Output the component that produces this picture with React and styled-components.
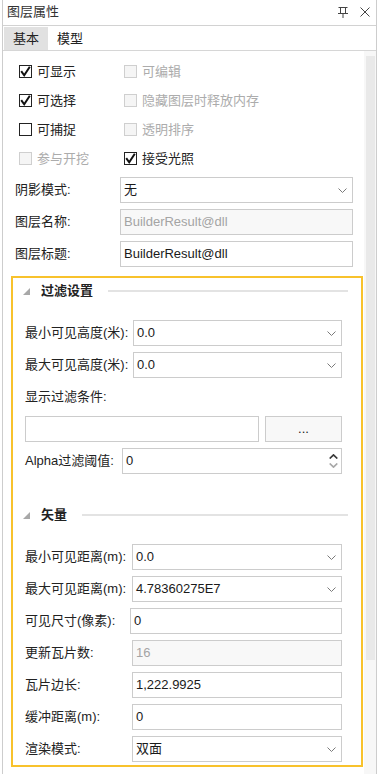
import styled, { createGlobalStyle } from "styled-components";

const checks = [
  { label: "可显示", checked: true },
  { label: "可编辑", disabled: true },
  { label: "可选择", checked: true },
  { label: "隐藏图层时释放内存", disabled: true },
  { label: "可捕捉" },
  { label: "透明排序", disabled: true },
  { label: "参与开挖", disabled: true },
  { label: "接受光照", checked: true },
];

const layerFields = [
  { label: "阴影模式:", value: "无", kind: "select" },
  { label: "图层名称:", value: "BuilderResult@dll", disabled: true },
  { label: "图层标题:", value: "BuilderResult@dll" },
];

const vectorFields = [
  { label: "最小可见距离(m):", value: "0.0", kind: "select" },
  { label: "最大可见距离(m):", value: "4.78360275E7", kind: "select" },
  { label: "可见尺寸(像素):", value: "0", width: 105 },
  { label: "更新瓦片数:", value: "16", disabled: true },
  { label: "瓦片边长:", value: "1,222.9925" },
  { label: "缓冲距离(m):", value: "0" },
  { label: "渲染模式:", value: "双面", kind: "select" },
];

function CheckBox({ checked, disabled }) {
  return (
    <svg width="13" height="13" viewBox="0 0 13 13">
      <rect
        x="0.5"
        y="0.5"
        width="12"
        height="12"
        fill={disabled ? "#f5f5f5" : "#fff"}
        stroke={disabled ? "#cfcfcf" : "#222"}
      />
      {checked && (
        <path d="M2.2 6.2 L5.2 10.3 L10.8 1.8" stroke="#111" strokeWidth="2" fill="none" />
      )}
    </svg>
  );
}

function Chevron() {
  return (
    <svg width="9" height="5" viewBox="0 0 9 5">
      <path d="M0.5 0.5 L4.5 4.5 L8.5 0.5" stroke="#7a7a7a" fill="none" />
    </svg>
  );
}

function Field({ label, value, kind, disabled, width }) {
  return (
    <Row>
      <Label $width={width}>{label}</Label>
      <Control $disabled={disabled}>
        <span>{value}</span>
        {kind === "select" && <Chevron />}
      </Control>
    </Row>
  );
}

function SectionHeader({ title }) {
  return (
    <Header>
      <svg width="7" height="7" viewBox="0 0 7 7">
        <polygon points="7,0 7,7 0,7" fill="#a8a8a8" />
      </svg>
      <HeaderTitle>{title}</HeaderTitle>
      <HeaderLine />
    </Header>
  );
}

export default function App() {
  return (
    <>
      <GlobalStyle />
      <Panel>
        <TitleBar>
          <span>图层属性</span>
          <TitleIcons>
            <svg width="10" height="11" viewBox="0 0 10 11">
              <path d="M0.5 0.5H9.5M2.5 0.5V6M7.5 0.5V6M0 6.5H10" stroke="#444" fill="none" />
              <path d="M5 7V11" stroke="#8a8a8a" strokeWidth="1.6" />
            </svg>
            <svg width="10" height="10" viewBox="0 0 10 10">
              <path d="M0.5 0.5L9.5 9.5M9.5 0.5L0.5 9.5" stroke="#444" fill="none" />
            </svg>
          </TitleIcons>
        </TitleBar>
        <TabBar>
          <Tab $active>基本</Tab>
          <Tab>模型</Tab>
        </TabBar>
        <Body>
          <Content>
            <CheckGrid>
              {checks.map((c) => (
                <CheckItem key={c.label} $disabled={c.disabled}>
                  <CheckBox checked={c.checked} disabled={c.disabled} />
                  <span>{c.label}</span>
                </CheckItem>
              ))}
            </CheckGrid>
            <TopFields>
              {layerFields.map((f) => (
                <Field key={f.label} {...f} width={105} />
              ))}
            </TopFields>
            <Highlight>
              <SectionHeader title="过滤设置" />
              <FieldList>
                <Field label="最小可见高度(米):" value="0.0" kind="select" width={108} />
                <Field label="最大可见高度(米):" value="0.0" kind="select" width={108} />
                <Row>
                  <Label>显示过滤条件:</Label>
                </Row>
                <Row>
                  <Control />
                  <BrowseButton>...</BrowseButton>
                </Row>
                <Row>
                  <Label $width={97}>Alpha过滤阈值:</Label>
                  <Control>
                    <span>0</span>
                    <Spin>
                      <svg width="9" height="5" viewBox="0 0 9 5">
                        <path d="M0.7 4.5 L4.5 0.9 L8.3 4.5" stroke="#3a3a3a" strokeWidth="1.7" fill="none" />
                      </svg>
                      <svg width="9" height="5" viewBox="0 0 9 5">
                        <path d="M0.7 0.5 L4.5 4.1 L8.3 0.5" stroke="#a8a8a8" strokeWidth="1.7" fill="none" />
                      </svg>
                    </Spin>
                  </Control>
                </Row>
              </FieldList>
              <SectionGap />
              <SectionHeader title="矢量" />
              <FieldList>
                {vectorFields.map((f) => (
                  <Field key={f.label} {...f} width={f.width || 107} />
                ))}
              </FieldList>
            </Highlight>
          </Content>
          <ScrollTrack>
            <ScrollThumb />
          </ScrollTrack>
        </Body>
      </Panel>
    </>
  );
}

const GlobalStyle = createGlobalStyle`
  * { box-sizing: border-box; }
  html, body { margin: 0; padding: 0; background: #fff; }
  body {
    font-family: "Liberation Sans", "Noto Sans CJK SC", sans-serif;
    font-size: 13px;
    line-height: 18px;
    color: #222;
  }
`;

const Panel = styled.div`
  margin-left: 2px;
  width: 375px;
  height: 774px;
  border-left: 1px solid #cdcdcd;
  border-right: 1px solid #cdcdcd;
  display: flex;
  flex-direction: column;
  overflow: hidden;
  background: #fff;
`;

const TitleBar = styled.div`
  height: 26px;
  flex-shrink: 0;
  display: flex;
  align-items: center;
  padding: 0 6px 1px 4px;
  border-bottom: 1px solid #d2d2d2;
  color: #333;
`;

const TitleIcons = styled.div`
  margin-left: auto;
  display: flex;
  align-items: center;
  gap: 12px;
`;

const TabBar = styled.div`
  height: 25px;
  flex-shrink: 0;
  display: flex;
  padding: 1px 0 0 1px;
  border-bottom: 1px solid #d6d6d6;
`;

const Tab = styled.div`
  height: 23px;
  line-height: 23px;
  padding: 0 9px;
  background: ${(p) => (p.$active ? "#e1e1e1" : "transparent")};
  color: #222;
`;

const Body = styled.div`
  flex: 1;
  min-height: 0;
  display: flex;
`;

const Content = styled.div`
  flex: 1;
  min-width: 0;
  padding-top: 6px;
  overflow: hidden;
`;

const ScrollTrack = styled.div`
  width: 12px;
  flex-shrink: 0;
  background: #f7f7f7;
  padding: 5px 1px 0 2px;
`;

const ScrollThumb = styled.div`
  height: 604px;
  background: #e9e9e9;
`;

const CheckGrid = styled.div`
  display: grid;
  grid-template-columns: 105px 1fr;
  grid-auto-rows: 29px;
  padding-left: 16px;
`;

const CheckItem = styled.div`
  display: flex;
  align-items: center;
  gap: 5px;
  color: ${(p) => (p.$disabled ? "#acacac" : "#222")};

  svg {
    flex-shrink: 0;
  }
`;

const TopFields = styled.div`
  display: flex;
  flex-direction: column;
  gap: 6px;
  padding: 4px 11px 0 12px;
`;

const Row = styled.div`
  height: 26px;
  display: flex;
  align-items: center;
  gap: 6px;
`;

const Label = styled.div`
  flex-shrink: 0;
  width: ${(p) => (p.$width ? `${p.$width}px` : "auto")};
  margin-right: ${(p) => (p.$width ? "-6px" : "0")};
  white-space: nowrap;
  color: #222;
`;

const Control = styled.div`
  flex: 1;
  min-width: 0;
  height: 26px;
  display: flex;
  align-items: center;
  justify-content: space-between;
  padding: 0 5px 0 3px;
  border: 1px solid #cccccc;
  background: ${(p) => (p.$disabled ? "#f8f8f8" : "#fff")};
  color: ${(p) => (p.$disabled ? "#a4a4a4" : "#1a1a1a")};
  white-space: nowrap;
`;

const BrowseButton = styled.div`
  width: 77px;
  flex-shrink: 0;
  height: 26px;
  display: flex;
  align-items: center;
  justify-content: center;
  border: 1px solid #cccccc;
  background: #f8f8f8;
  color: #222;
`;

const Spin = styled.div`
  display: flex;
  flex-direction: column;
  gap: 4px;
  margin-right: -2px;
`;

const Highlight = styled.div`
  margin: 9px 1px 0 8px;
  border: 2px solid #f8c22c;
  padding: 0 13px 3px 10px;
`;

const Header = styled.div`
  height: 26px;
  display: flex;
  align-items: center;
  margin-bottom: 16px;
`;

const HeaderTitle = styled.span`
  margin-left: 11px;
  font-weight: 700;
  color: #222;
`;

const HeaderLine = styled.div`
  flex: 1;
  height: 2px;
  margin-left: 15px;
  background: #e3e3e3;
`;

const SectionGap = styled.div`
  height: 28px;
`;

const FieldList = styled.div`
  display: flex;
  flex-direction: column;
  gap: 6px;
  padding: 0 6px 0 2px;
`;
